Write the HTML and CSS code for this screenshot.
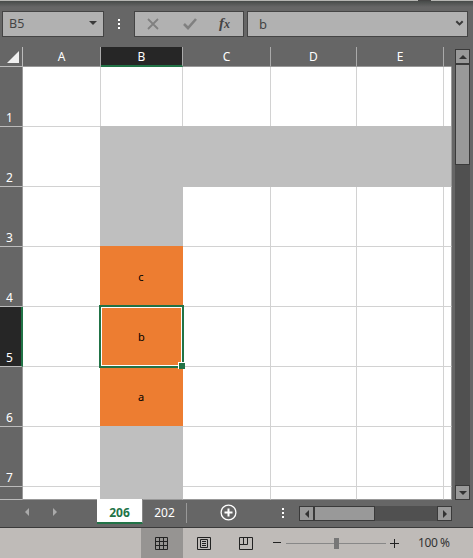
FILE: index.html
```html
<!DOCTYPE html>
<html lang="en">
<head>
<meta charset="utf-8">
<title>Spreadsheet</title>
<link rel="stylesheet" href="styles.css">
</head>
<body>
<div class="app">
  <header class="formula-bar">
    <div class="box name-box"><span>B5</span><i class="caret"></i></div>
    <div class="dots"><i></i><i></i><i></i></div>
    <div class="box tools">
      <svg width="12" height="12" viewBox="0 0 12 12"><path d="M1 1l10 10M11 1L1 11" stroke="#808080" stroke-width="1.8" fill="none"/></svg>
      <svg width="14" height="12" viewBox="0 0 14 12"><path d="M1 6l4 4 8-9" stroke="#808080" stroke-width="2.6" fill="none"/></svg>
      <span class="fx">f<small>x</small></span>
    </div>
    <div class="box formula"><span>b</span><svg width="9" height="7" viewBox="0 0 9 7"><path d="M1.3 1.2l3.2 3.2 3.2-3.2" stroke="#3a3a3a" stroke-width="2" fill="none"/></svg></div>
  </header>
  <main class="work">
    <div class="sheet">
      <div class="corner"><i></i></div><div class="col">A</div><div class="col active">B</div><div class="col">C</div><div class="col">D</div><div class="col">E</div><div class="col last"></div>
      <div class="row">1</div><div></div><div></div><div></div><div></div><div></div><div class="last"></div>
      <div class="row">2</div><div></div><div class="gray"></div><div class="gray"></div><div class="gray"></div><div class="gray"></div><div class="gray last"></div>
      <div class="row">3</div><div></div><div class="gray"></div><div></div><div></div><div></div><div class="last"></div>
      <div class="row">4</div><div></div><div class="orange">c</div><div></div><div></div><div></div><div class="last"></div>
      <div class="row active">5</div><div></div><div class="orange selected">b</div><div></div><div></div><div></div><div class="last"></div>
      <div class="row">6</div><div></div><div class="orange">a</div><div></div><div></div><div></div><div class="last"></div>
      <div class="row">7</div><div></div><div class="gray"></div><div></div><div></div><div></div><div class="last"></div>
      <div class="row end"></div><div class="end"></div><div class="gray end"></div><div class="end"></div><div class="end"></div><div class="end"></div><div class="last end"></div>
    </div>
    <div class="vscroll">
      <div class="btn"><i class="tri up"></i></div><div class="thumb"></div><div class="track"></div><div class="btn"><i class="tri down"></i></div>
    </div>
  </main>
  <nav class="tabs">
    <div class="arrows"><i class="tri left"></i><i class="tri right"></i></div>
    <div class="tab current">206</div>
    <div class="tab">202</div>
    <svg class="add" width="17" height="17" viewBox="0 0 17 17"><circle cx="8.5" cy="8.5" r="7.4" fill="none" stroke="#fff" stroke-width="1.3"/><path d="M8.5 4.5v8M4.5 8.5h8" stroke="#fff" stroke-width="2"/></svg>
    <div class="dots"><i></i><i></i><i></i></div>
    <div class="hscroll"><div class="btn"><i class="tri left"></i></div><div class="thumb"></div><div class="track"></div><div class="btn"><i class="tri right"></i></div></div>
  </nav>
  <footer class="status">
    <div class="view on"><svg width="14" height="14" viewBox="0 0 14 14"><path d="M.5.5h12v12H.5zM4.5.5v12M8.5.5v12M.5 4.5h12M.5 8.5h12" fill="none" stroke="#222"/></svg></div>
    <div class="view"><svg width="14" height="14" viewBox="0 0 14 14"><path d="M.5.5h13v12H.5zM3.5 2.5h7v8h-7zM5 4.5h4M5 6.5h4M5 8.5h4" fill="none" stroke="#222"/></svg></div>
    <div class="view"><svg width="14" height="14" viewBox="0 0 14 14"><path d="M.5.5h13v12H.5zM.5 7.5h8v-7M4.5.5v7" fill="none" stroke="#222"/></svg></div>
    <div class="zoom">
      <i class="minus"></i><div class="slider"><i></i></div>
      <svg width="9" height="9" viewBox="0 0 9 9"><path d="M4.5 0v9M0 4.5h9" stroke="#222"/></svg>
      <span>100 %</span>
    </div>
  </footer>
</div>
</body>
</html>
```
FILE: styles.css
```css
* { box-sizing: border-box; }
body { margin: 0; font: 12px/16px "Noto Sans", "Open Sans", sans-serif; background: #666; overflow: hidden; }
svg, i { display: block; flex: none; }
.app { width: 473px; height: 558px; display: flex; flex-direction: column; background: #666; }

.formula-bar { height: 47px; padding: 11px 0 0 2px; display: flex; background: linear-gradient(#444, #444) 418px 0 / 13px 1px no-repeat, linear-gradient(#b5b5b2 0 1px, #474b49 1px, #666 7px); }
.box { height: 26px; background: #b1b1b1; border: 1px solid #444; display: flex; align-items: center; color: #444; }
.name-box { width: 102px; padding: 0 6px; justify-content: space-between; font-size: 12.5px; }
.caret { border: 4px solid transparent; border-top-color: #3a3a3a; border-bottom: 0; margin-bottom: 2px; }
.dots { display: flex; flex-direction: column; gap: 2px; }
.dots i { width: 2px; height: 2px; background: #fff; }
.formula-bar .dots { margin: 8px 14px 0; }
.tools { width: 110px; padding-left: 12px; margin-right: 3px; }
.tools svg + svg { margin-left: 24px; }
.fx { margin: -2px 0 0 22px; font: italic bold 15px/16px "Liberation Serif", serif; }
.fx small { font-size: 12px; }
.formula { width: 221px; padding: 0 3px 0 11px; justify-content: space-between; font-size: 13px; }
.formula svg { margin-top: -1px; }

.work { height: 453px; display: flex; }
.sheet { width: 452px; display: grid; grid-template-columns: 23px 78px 82px 88px 86px 87px 8px; grid-template-rows: 20px repeat(7, 60px) 13px; background: #fff; }
.sheet > div { border: solid #d2d2d2; border-width: 0 1px 1px 0; font-size: 11px; display: flex; align-items: center; justify-content: center; }
.sheet > .last { border-right-color: #999; }
.sheet > .end { border-bottom-color: #999; }
.sheet > .col { background: #666; color: #fff; font-size: 12px; border-right-color: #aaa; border-bottom-color: #999; }
.sheet > .col.last { border-right-color: #666; }
.sheet > .col.active { background: #262626; border-bottom: 2px solid #217346; padding-top: 1px; }
.sheet > .corner { background: #666; border-color: #bbb; align-items: flex-end; justify-content: flex-end; padding: 0 3px 3px 0; }
.corner i { width: 12px; height: 12px; background: #f0f0f0; clip-path: polygon(100% 0, 100% 100%, 0 100%); }
.sheet > .row { background: #666; color: #fff; font-size: 12px; align-items: flex-end; padding-right: 3px; border-right-color: #999; border-bottom-color: #bbb; }
.sheet > .row.active { background: #262626; border-right: 2px solid #217346; padding-right: 2px; }
.sheet > .gray { background: #bfbfbf; margin: -1px 0 0 -1px; border-color: #bfbfbf; }
.sheet > .gray.last { border-right-color: #999; }
.sheet > .gray.end { border-bottom-color: #999; }
.sheet > .orange { background: #ed7d31; margin: -1px 0 0 -1px; border-color: #ed7d31; color: #000; padding-top: 2px; }
.sheet > .selected { position: relative; z-index: 1; margin: -2px -1px -1px -2px; border: 2px solid #217346; box-shadow: inset 0 0 0 1px #fff; padding-top: 0; }
.selected::after { content: ""; position: absolute; right: -3px; bottom: -3px; width: 6px; height: 6px; background: #217346; border: solid #fff; border-width: 1px 0 0 1px; }

.btn { width: 15px; height: 15px; background: #999; border: 1px solid #3a3a3a; display: flex; align-items: center; justify-content: center; flex: none; }
.thumb { background: #999; border: 1px solid #3a3a3a; flex: none; }
.track { background: #505050; flex: 1; }
.tri { width: 0; height: 0; border: 4px solid transparent; }
.up { border-bottom-color: #333; border-top: 0; }
.down { border-top-color: #333; border-bottom: 0; }
.left { border-right-color: #333; border-left: 0; }
.right { border-left-color: #333; border-right: 0; }
.vscroll { width: 15px; height: 451px; margin: 2px 0 0 3px; display: flex; flex-direction: column; }
.vscroll .thumb { height: 101px; }

.tabs { height: 28px; display: flex; border-bottom: 1px solid #3a3a3a; color: #fff; }
.arrows { width: 97px; padding: 8px 0 0 25px; display: flex; gap: 24px; }
.arrows .left { border-right-color: #aaa; }
.arrows .right { border-left-color: #aaa; }
.tab { width: 44px; height: 20px; margin-top: 3px; line-height: 20px; text-align: center; border-right: 1px solid #999; }
.tab.current { width: 46px; height: 25px; margin-top: -1px; line-height: 27px; background: #fff; color: #217346; font-weight: bold; border-right-color: #888; border-bottom: 2px solid #217346; }
.add { margin: 4px 0 0 33px; }
.tabs .dots { margin: 8px 0 0 45px; }
.hscroll { width: 153px; height: 15px; margin: 6px 0 0 15px; display: flex; }
.hscroll .thumb { width: 61px; }

.status { height: 30px; display: flex; padding-left: 141px; background: #bfbbb8; color: #333; }
.view { width: 42px; display: flex; align-items: center; justify-content: center; padding-top: 2px; }
.view.on { background: #969492; }
.zoom { display: flex; align-items: center; padding-left: 6px; }
.minus { width: 8px; height: 1px; background: #222; margin-bottom: 1px; }
.slider { width: 100px; height: 1px; margin: 0 4px 0 5px; background: #888; display: flex; align-items: center; justify-content: center; }
.slider i { width: 5px; height: 11px; background: #777; }
.zoom span { margin-left: 19px; letter-spacing: -0.4px; }
```
